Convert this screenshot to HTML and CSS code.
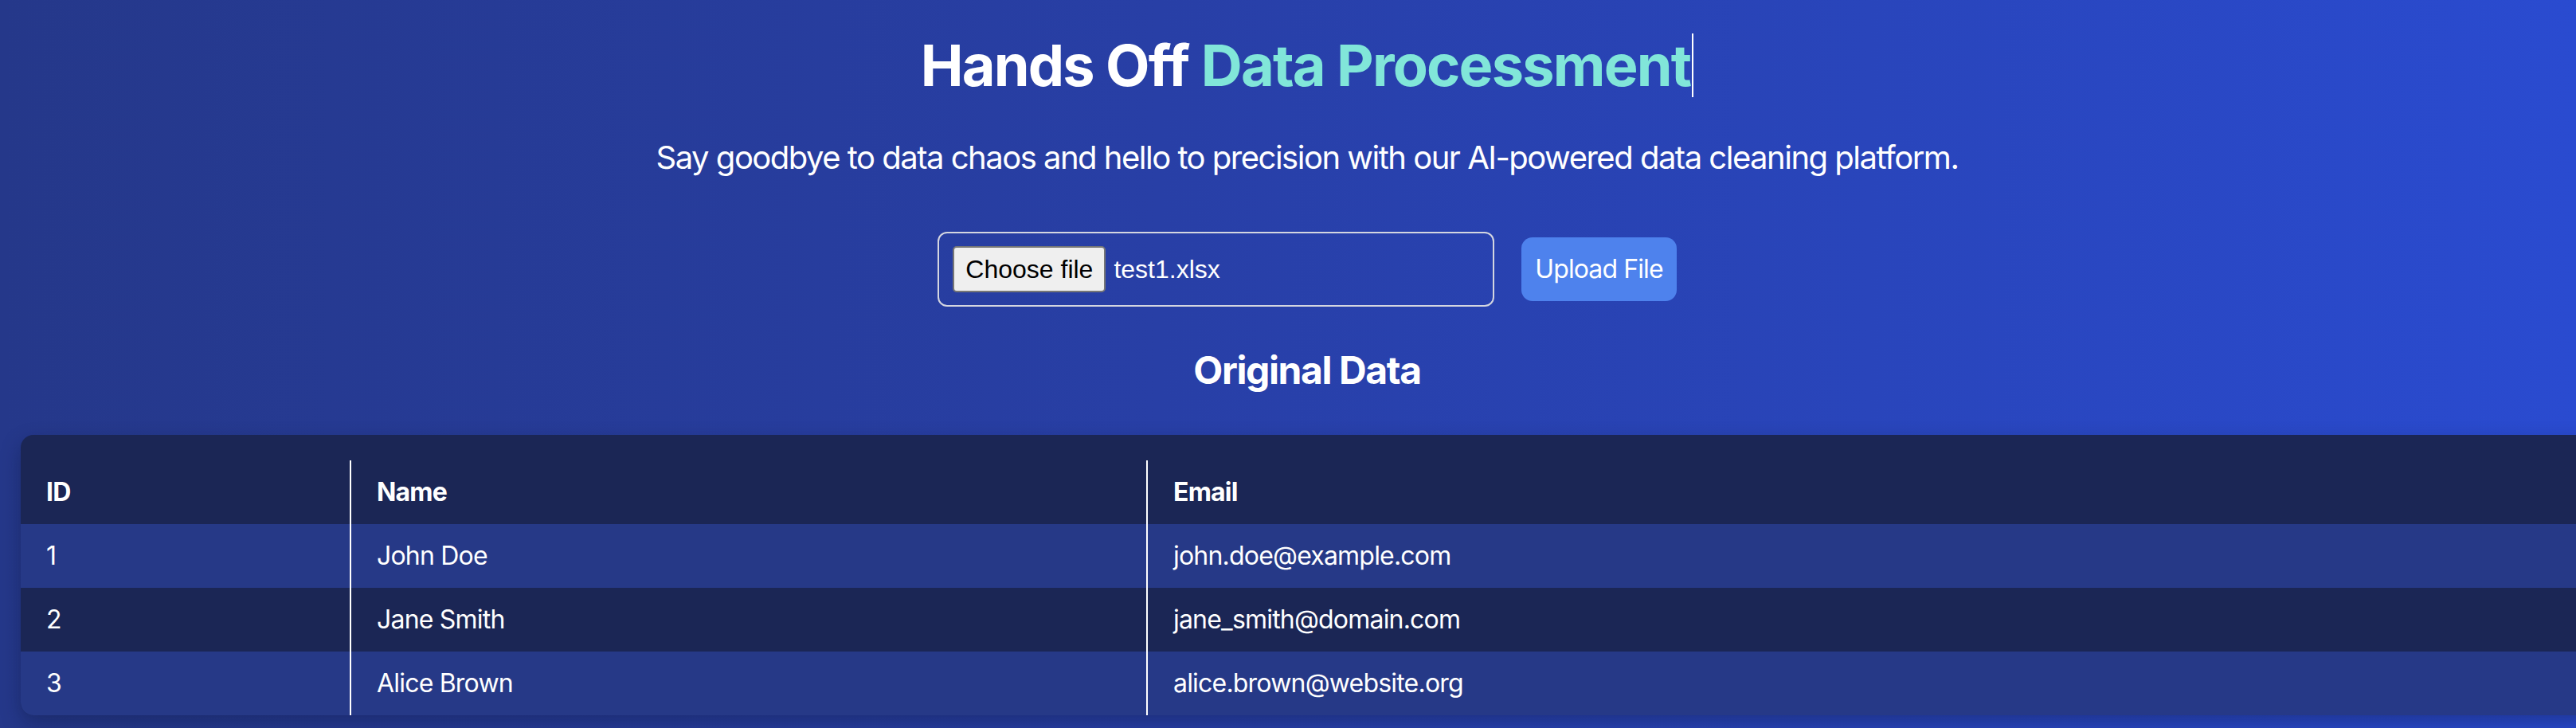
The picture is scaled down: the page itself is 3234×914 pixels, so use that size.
FILE: index.html
```html
<!DOCTYPE html>
<html lang="en">
<head>
<meta charset="utf-8">
<title>Hands Off Data Processment</title>
<link rel="stylesheet" href="styles.css">
</head>
<body>
<main class="page">
  <h1 class="title">Hands Off <span class="accent">Data Processment</span></h1>
  <p class="subtitle">Say goodbye to data chaos and hello to precision with our AI-powered data cleaning platform.</p>

  <form class="upload-row">
    <div class="file-box">
      <span class="file-btn">Choose file</span>
      <span class="file-name">test1.xlsx</span>
    </div>
    <button type="button" class="upload-btn">Upload File</button>
  </form>

  <h2 class="section-title">Original Data</h2>

  <div class="table-card">
    <table class="data-table">
      <colgroup>
        <col class="col-id">
        <col class="col-name">
        <col class="col-email">
      </colgroup>
      <thead>
        <tr><th>ID</th><th>Name</th><th>Email</th></tr>
      </thead>
      <tbody>
        <tr><td>1</td><td>John Doe</td><td>john.doe@example.com</td></tr>
        <tr><td>2</td><td>Jane Smith</td><td>jane_smith@domain.com</td></tr>
        <tr><td>3</td><td>Alice Brown</td><td>alice.brown@website.org</td></tr>
      </tbody>
    </table>
  </div>
</main>
</body>
</html>
```

FILE: styles.css
```css
html, body {
  margin: 0;
  padding: 0;
  height: 100%;
  overflow: hidden;
}

body {
  background: linear-gradient(to right, #25388a 0%, #283fa6 45%, #2a4bd0 100%);
  color: #ffffff;
  font-family: Inter, "Noto Sans", sans-serif;
}

.page {
  width: 3282px;
  box-sizing: border-box;
  padding: 42px 26px 0;
}

.title {
  margin: 0;
  text-align: center;
  font-size: 72px;
  line-height: 80px;
  font-weight: 700;
  letter-spacing: -1.8px;
}

.accent {
  display: inline-block;
  color: #81e6d9;
  border-right: 2px solid #ffffff;
  padding-right: 2px;
}

.subtitle {
  margin: 48px 0 0;
  text-align: center;
  font-size: 40px;
  line-height: 56px;
  letter-spacing: -1.5px;
}

.upload-row {
  display: flex;
  justify-content: center;
  align-items: center;
  gap: 34px;
  margin: 65px 0 0;
}

.file-box {
  display: flex;
  align-items: center;
  gap: 10px;
  width: 699px;
  box-sizing: border-box;
  border: 2px solid #d4d6e0;
  border-radius: 12px;
  padding: 16px 17px;
  font-family: "Liberation Sans", Arial, sans-serif;
  font-size: 32px;
}

.file-btn {
  display: flex;
  align-items: center;
  height: 58px;
  box-sizing: border-box;
  padding: 0 14px;
  background: #efefef;
  border: 2px solid #767676;
  border-radius: 5px;
  color: #000000;
}

.file-name {
  color: #ffffff;
}

.upload-btn {
  height: 80px;
  padding: 0 17px;
  border: none;
  border-radius: 14px;
  background: #4e82ed;
  color: #ffffff;
  font-family: Inter, "Noto Sans", sans-serif;
  font-size: 32px;
  line-height: 48px;
  letter-spacing: -0.9px;
}

.section-title {
  margin: 48px 0 0;
  text-align: center;
  font-size: 48px;
  line-height: 64px;
  font-weight: 700;
  letter-spacing: -1.4px;
}

.table-card {
  margin-top: 49px;
  padding-top: 32px;
  background: #1b2655;
  border-radius: 16px;
  overflow: hidden;
  box-shadow: 0 10px 25px rgba(10, 16, 50, 0.35);
}

.data-table {
  width: 100%;
  table-layout: fixed;
  border-collapse: collapse;
  font-size: 32px;
  line-height: 48px;
  letter-spacing: -0.8px;
}

.col-id { width: 414px; }
.col-name { width: 1000px; }

.data-table th,
.data-table td {
  padding: 16px 32px;
  text-align: left;
  white-space: nowrap;
}

.data-table th {
  font-weight: 700;
}

.data-table th + th,
.data-table td + td {
  border-left: 2px solid #ffffff;
}

.data-table tbody tr:nth-child(odd) {
  background: #263987;
}

.data-table tbody tr:nth-child(even) {
  background: #1b2655;
}
```
